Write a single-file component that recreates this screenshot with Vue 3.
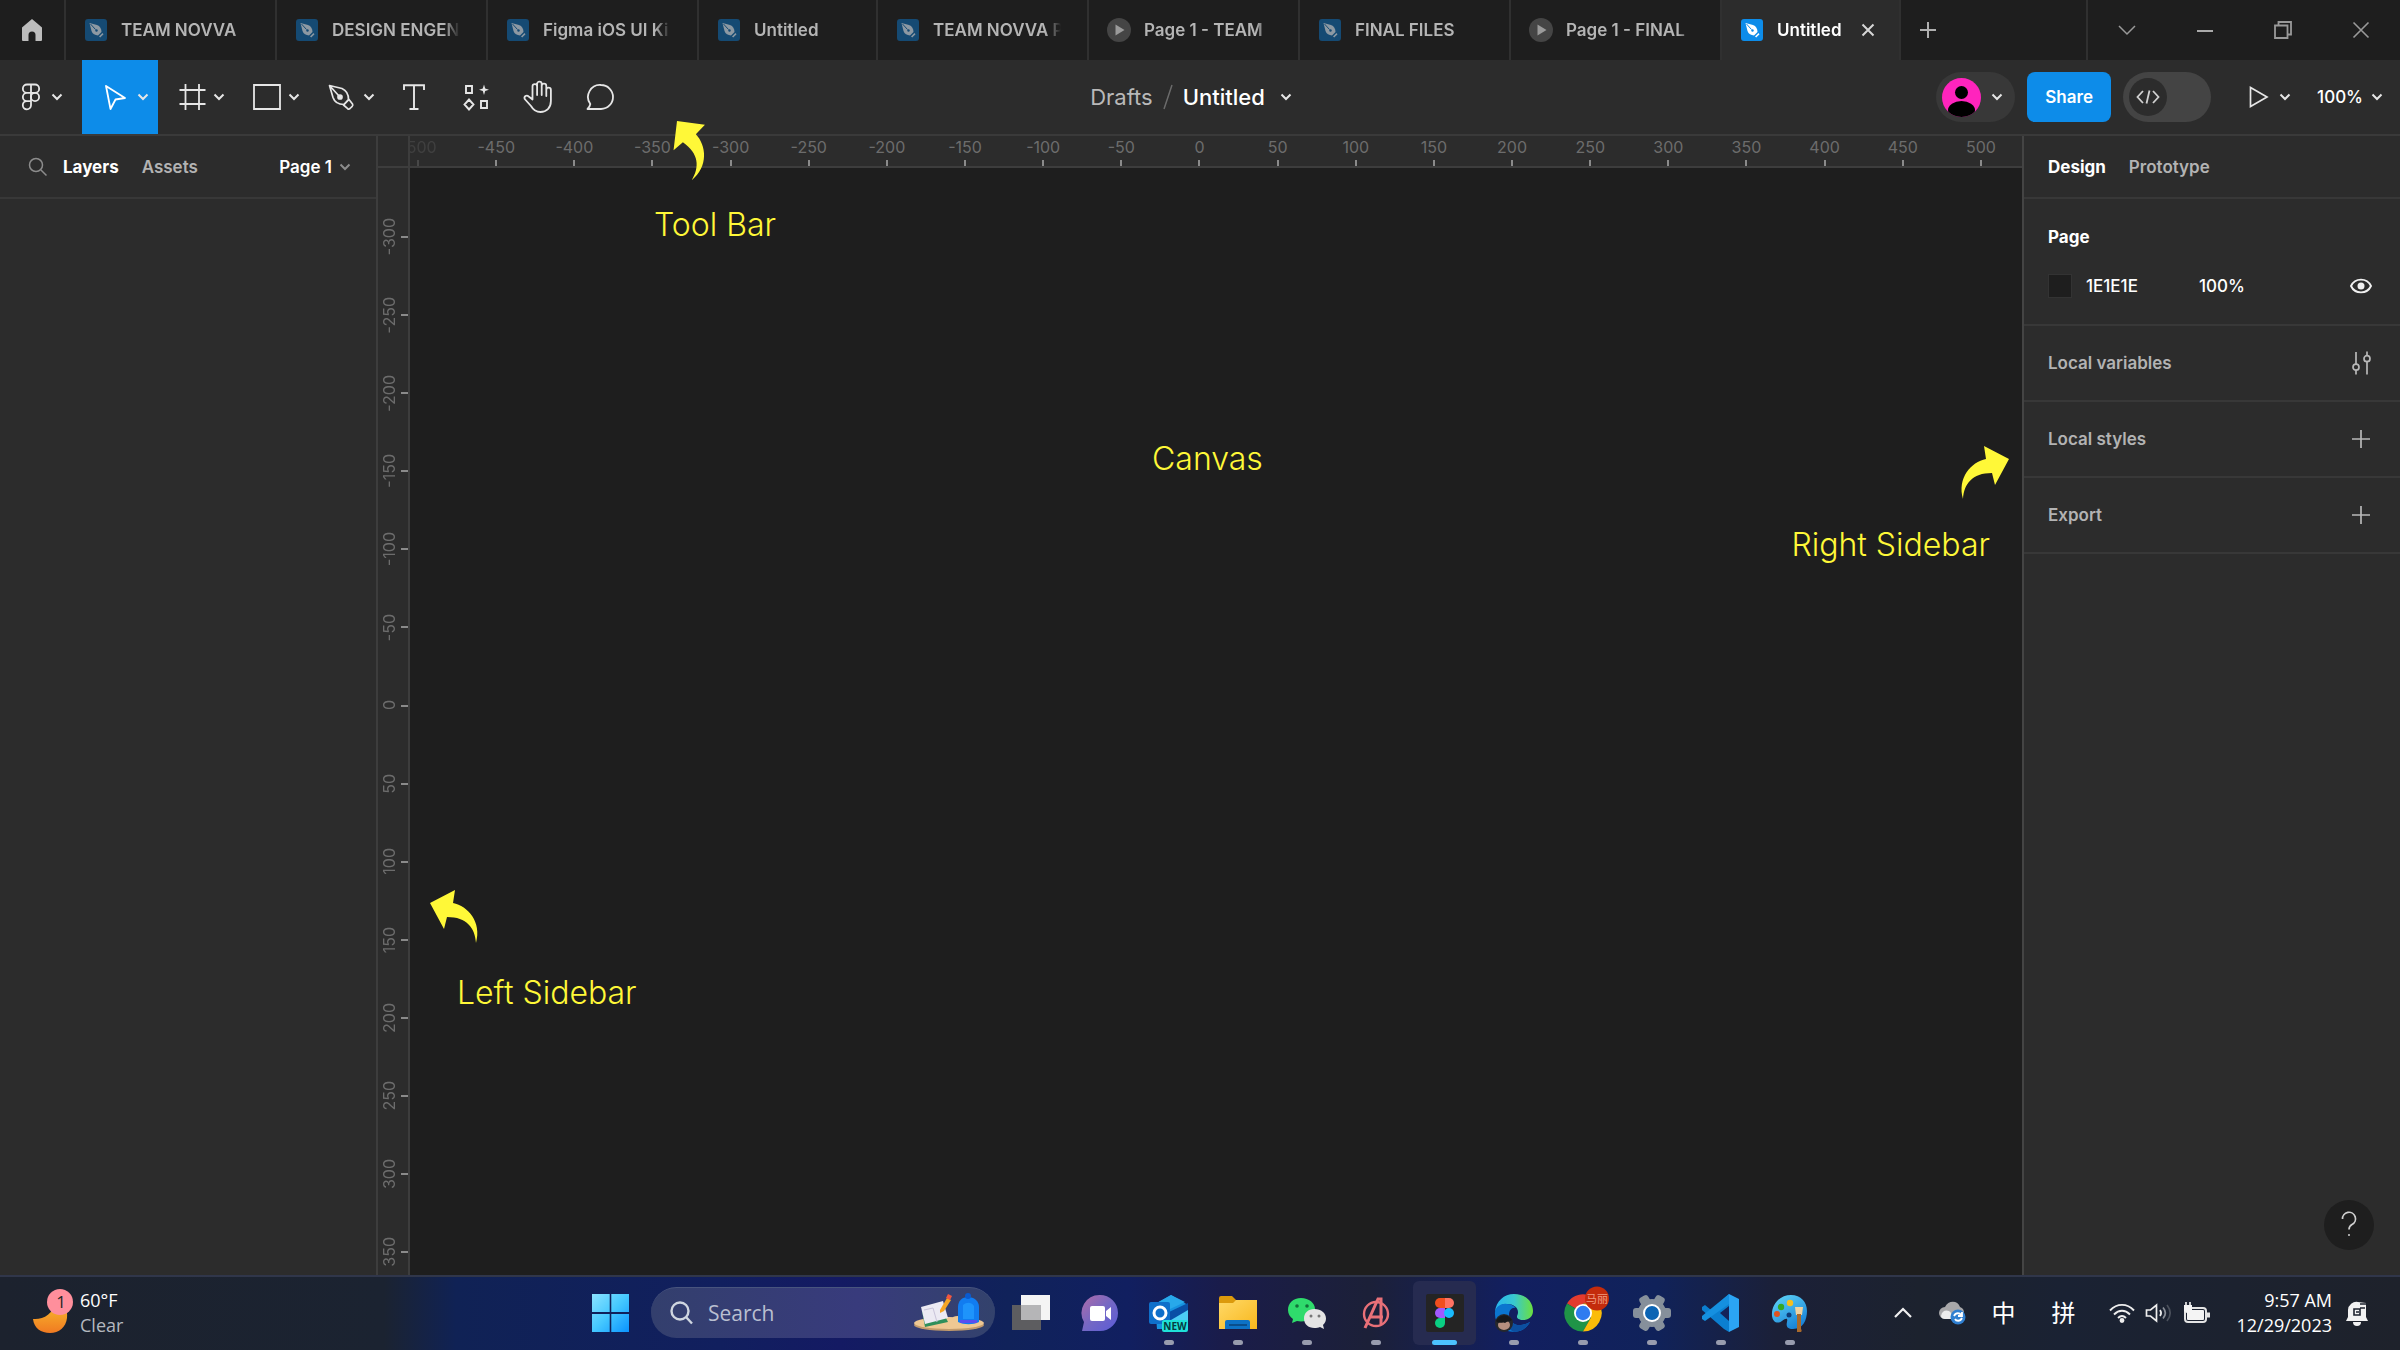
<script setup>
const tabs = [
  { kind: 'file', title: 'TEAM NOVVA', size: 'regular' },
  { kind: 'file', title: 'DESIGN ENGEN', size: 'regular' },
  { kind: 'file', title: 'Figma iOS UI Ki', size: 'regular' },
  { kind: 'file', title: 'Untitled', size: 'short' },
  { kind: 'file', title: 'TEAM NOVVA P', size: 'regular' },
  { kind: 'play', title: 'Page 1 - TEAM', size: 'regular' },
  { kind: 'file', title: 'FINAL FILES', size: 'regular' },
  { kind: 'play', title: 'Page 1 - FINAL', size: 'regular' },
  { kind: 'file', title: 'Untitled', size: 'short', active: true },
]

const range = (from, to) => {
  const out = []
  for (let v = from; v <= to; v += 50) out.push(v)
  return out
}
const rulerX = range(-500, 500)
const rulerY = range(-300, 350)

const sections = [
  { label: 'Local variables', icon: 'sliders' },
  { label: 'Local styles', icon: 'plus' },
  { label: 'Export', icon: 'plus' },
]
</script>

<template>
  <div class="screen">
    <nav class="tabbar" aria-label="Open files">
      <button class="home" aria-label="Home">
        <svg width="22" height="24" viewBox="0 0 22 24"><path d="M11 1 1 9.500V22a1 1 0 0 0 1 1h5.500v-6a3.500 3.500 0 0 1 7 0v6H20a1 1 0 0 0 1-1V9.500L17.500 6.500z" fill="#bdbdbd" /></svg>
      </button>
      <div v-for="(t, i) in tabs" :key="i" class="tab" :class="[t.size, { active: t.active }]">
        <svg v-if="t.kind === 'file'" class="tabicon" width="22" height="22" viewBox="0 0 22 22">
          <rect width="22" height="22" rx="3" :fill="t.active ? '#0d8ce9' : '#154a73'" />
          <g :fill="t.active ? '#fff' : '#8d99a3'">
            <path d="M4.500 4 12 6c3 1 4.500 4 4.500 7L13 16.500c-3-.3-5.500-1.500-6.500-4.500z" />
            <path d="m14 17.500 3.500-3.500 1 1.200-3.300 3.300z" />
          </g>
          <path d="m5.500 5 5 5.500" :stroke="t.active ? '#0d8ce9' : '#154a73'" stroke-width="1" />
          <circle cx="11.500" cy="11.500" r="1.200" :fill="t.active ? '#0d8ce9' : '#154a73'" />
        </svg>
        <svg v-else class="tabicon" width="24" height="24" viewBox="0 0 24 24">
          <circle cx="12" cy="12" r="12" fill="#454545" />
          <path d="M8.500 6.500v11l9-5.500z" fill="#9a9a9a" />
        </svg>
        <a href="#" class="tabtitle">{{ t.title }}</a>
        <button v-if="t.active" class="tabclose" aria-label="Close tab">
          <svg width="14" height="14" viewBox="0 0 14 14"><path d="m1.500 1.500 11 11m0-11-11 11" stroke="#d6d6d6" stroke-width="2" /></svg>
        </button>
      </div>
      <button class="newtab" aria-label="New tab">
        <svg width="18" height="18" viewBox="0 0 18 18"><path d="M9 1v16M1 9h16" stroke="#b0b0b0" stroke-width="2" /></svg>
      </button>
      <div class="wincontrols">
        <button aria-label="Tab list"><svg width="18" height="12" viewBox="0 0 18 12"><path d="m1 2 8 8 8-8" fill="none" stroke="#999" stroke-width="1.500" /></svg></button>
        <button aria-label="Minimize"><svg width="18" height="4" viewBox="0 0 18 4"><path d="M1 3h16" stroke="#aaa" stroke-width="2" /></svg></button>
        <button aria-label="Restore"><svg width="18" height="18" viewBox="0 0 18 18"><path d="M1 4.500h12.500V17H1zM4.500 4.500V1H17v12.500h-3.500" fill="none" stroke="#999" stroke-width="1.800" /></svg></button>
        <button aria-label="Close"><svg width="18" height="18" viewBox="0 0 18 18"><path d="m1.500 1.500 15 15m0-15-15 15" stroke="#999" stroke-width="1.600" /></svg></button>
      </div>
    </nav>

    <header class="toolbar">
      <div class="tools">
        <button class="tool menu" aria-label="Main menu">
          <svg width="24" height="28" viewBox="0 0 24 28" fill="none" stroke="#e6e6e6" stroke-width="1.800">
            <path d="M12 1.500H8a4 4 0 0 0 0 8.300h4zM12 1.500h4a4 4 0 0 1 0 8.300h-4zM12 9.800H8a4 4 0 0 0 0 8.300h4zM12 18.100H8a4.100 4.100 0 1 0 4 4.200z" /><circle cx="16" cy="14" r="4.100" />
          </svg>
          <svg class="chev" width="12" height="8" viewBox="0 0 12 8"><path d="m1.500 1.500 4.500 4.500 4.500-4.500" /></svg>
        </button>
        <button class="tool selected" aria-label="Move">
          <svg width="28" height="28" viewBox="0 0 28 28" fill="none" stroke="#fff" stroke-width="1.800" stroke-linejoin="round"><path d="m4 3 19 12-9.500 1.500L8.500 26z" /></svg>
          <svg class="chev" width="12" height="8" viewBox="0 0 12 8"><path d="m1.500 1.500 4.500 4.500 4.500-4.500" /></svg>
        </button>
        <button class="tool" aria-label="Frame">
          <svg width="28" height="28" viewBox="0 0 28 28" fill="none" stroke="#e6e6e6" stroke-width="1.800"><path d="M7.500 1v26M21 1v26M1.500 7h26M1.500 21h26" /></svg>
          <svg class="chev" width="12" height="8" viewBox="0 0 12 8"><path d="m1.500 1.500 4.500 4.500 4.500-4.500" /></svg>
        </button>
        <button class="tool" aria-label="Rectangle">
          <svg width="28" height="28" viewBox="0 0 28 28" fill="none" stroke="#e6e6e6" stroke-width="1.800"><path d="M1 2h26v24H1z" /></svg>
          <svg class="chev" width="12" height="8" viewBox="0 0 12 8"><path d="m1.500 1.500 4.500 4.500 4.500-4.500" /></svg>
        </button>
        <button class="tool" aria-label="Pen">
          <svg width="28" height="28" viewBox="0 0 28 28" fill="none" stroke="#e6e6e6" stroke-width="1.700" stroke-linejoin="round">
            <path d="M1.500 2.500 14 5.500c4.500 2 6.500 6 6.500 11L16 21.500c-5 0-9.500-2.500-11-7zM1.500 2.500 11 13" /><circle cx="12" cy="14" r="2" fill="#e6e6e6" /><path d="m15.500 22 5.500-5.500 3.500 4.500c.6 1 .3 1.600-.3 2.300L22 25.500c-.8.700-1.500.8-2.300.2z" />
          </svg>
          <svg class="chev" width="12" height="8" viewBox="0 0 12 8"><path d="m1.500 1.500 4.500 4.500 4.500-4.500" /></svg>
        </button>
        <button class="tool single" aria-label="Text">
          <svg width="24" height="28" viewBox="0 0 24 28" fill="none" stroke="#e6e6e6" stroke-width="1.900"><path d="M2 7V2.200h20V7M12 2v23.800M7.500 26h9" /></svg>
        </button>
        <button class="tool single" aria-label="Resources">
          <svg width="28" height="28" viewBox="0 0 28 28" fill="none" stroke="#e6e6e6" stroke-width="1.900"><path d="M4 3h6v7H4zM19 18h6v7h-6zM7 16.500l4.500 5-4.500 5-4.500-5z" /><path d="m22 1.500 1.200 4 3.800 1.200-3.800 1.200-1.200 4-1.200-4L17 6.700l3.800-1.200z" fill="#e6e6e6" stroke="none" /></svg>
        </button>
        <button class="tool single" aria-label="Hand">
          <svg width="32" height="34" viewBox="0 0 32 34" fill="none" stroke="#e6e6e6" stroke-width="1.800" stroke-linecap="round" stroke-linejoin="round"><path d="M10.500 19.500V6.500a2.300 2.300 0 0 1 4.600 0V15 4a2.300 2.300 0 0 1 4.600 0v11V6a2.300 2.300 0 0 1 4.600 0v10-6a2.300 2.300 0 0 1 4.600 0v11c0 7-4.500 11-10.400 11-5 0-7.500-2.500-9.500-6L2.700 19c-1-2.500 1.800-4.500 4-2.500z" /></svg>
        </button>
        <button class="tool single" aria-label="Comment">
          <svg width="30" height="28" viewBox="0 0 30 28" fill="none" stroke="#e6e6e6" stroke-width="1.800" stroke-linejoin="round"><path d="M16 2a12 12 0 1 1 0 24H2.500c1.800-1.500 2.500-3 2.800-5A12 12 0 0 1 16 2z" /></svg>
        </button>
      </div>
      <div class="crumbs">
        <a href="#">Drafts</a>
        <svg width="10" height="26" viewBox="0 0 10 26"><path d="M9 1 1 25" stroke="#6b6b6b" stroke-width="1.500" /></svg>
        <a href="#" class="current">Untitled</a>
        <svg class="chev" width="12" height="8" viewBox="0 0 12 8"><path d="m1.500 1.500 4.500 4.500 4.500-4.500" /></svg>
      </div>
      <div class="actions">
        <button class="account" aria-label="Account">
          <svg width="39" height="39" viewBox="0 0 39 39"><defs><clipPath id="face"><circle cx="19.500" cy="19.500" r="19.500" /></clipPath></defs><g clip-path="url(#face)"><rect width="39" height="39" fill="#ff24bd" /><circle cx="19.500" cy="14.500" r="6.500" /><ellipse cx="19.500" cy="32" rx="13.500" ry="9" /></g></svg>
          <svg class="chev" width="12" height="8" viewBox="0 0 12 8"><path d="m1.500 1.500 4.500 4.500 4.500-4.500" /></svg>
        </button>
        <button class="share">Share</button>
        <label class="devmode">
          <input type="checkbox" aria-label="Dev Mode" />
          <span class="knob"><svg width="24" height="16" viewBox="0 0 24 16" fill="none" stroke="#d0d0d0" stroke-width="1.800"><path d="M7 2 1.500 8 7 14M17 2l5.500 6-5.500 6M13.500 1.500l-3 13" /></svg></span>
        </label>
        <button class="present" aria-label="Present">
          <svg width="20" height="24" viewBox="0 0 20 24"><path d="M1.500 2.500v19L18 12z" fill="none" stroke="#e6e6e6" stroke-width="1.700" /></svg>
          <svg class="chev" width="12" height="8" viewBox="0 0 12 8"><path d="m1.500 1.500 4.500 4.500 4.500-4.500" /></svg>
        </button>
        <button class="zoom">100%
          <svg class="chev" width="12" height="8" viewBox="0 0 12 8"><path d="m1.500 1.500 4.500 4.500 4.500-4.500" /></svg>
        </button>
      </div>
    </header>

    <main class="work">
      <aside class="left">
        <div class="panelhead">
          <button class="find" aria-label="Find"><svg width="20" height="20" viewBox="0 0 20 20" fill="none" stroke="#8c8c8c" stroke-width="1.500"><circle cx="8" cy="8" r="6.500" /><path d="m13 13 5.500 5.500" /></svg></button>
          <button class="ptab on">Layers</button>
          <button class="ptab">Assets</button>
          <button class="pages">Page 1 <svg class="chev dim" width="12" height="8" viewBox="0 0 12 8"><path d="m1.500 1.500 4.500 4.500 4.500-4.500" /></svg></button>
        </div>
      </aside>

      <section class="stage">
        <div class="corner"></div>
        <div class="rulerx"><div class="trackx"><span v-for="v in rulerX" :key="v" :class="{ faint: v === -500 }">{{ v }}</span></div></div>
        <div class="rulery"><div class="tracky"><span v-for="v in rulerY" :key="v"><b>{{ v }}</b></span></div></div>
        <div class="canvas">
          <svg class="arrow a-tool" width="48" height="54" viewBox="0 0 48 54"><path d="M0 13 25 0l-2 13C38 16 52 32 46 53 45 38 37 27 17 27l-3 12z" transform="rotate(35 0 13)" /></svg>
          <p class="note n-tool">Tool Bar</p>
          <p class="note n-canvas">Canvas</p>
          <svg class="arrow a-right" width="48" height="54" viewBox="0 0 48 54"><path d="M48 13 23 0l2 13C10 16-4 32 2 53 3 38 11 27 31 27l3 12z" /></svg>
          <p class="note n-right">Right Sidebar</p>
          <svg class="arrow a-left" width="48" height="54" viewBox="0 0 48 54"><path d="M0 13 25 0l-2 13C38 16 52 32 46 53 45 38 37 27 17 27l-3 12z" /></svg>
          <p class="note n-left">Left Sidebar</p>
        </div>
      </section>

      <aside class="right">
        <div class="panelhead">
          <button class="ptab on">Design</button>
          <button class="ptab">Prototype</button>
        </div>
        <div class="page">
          <h2>Page</h2>
          <div class="fill">
            <span class="swatch"></span>
            <input class="hex" value="1E1E1E" aria-label="Page colour" />
            <input class="alpha" value="100%" aria-label="Opacity" />
            <button aria-label="Toggle visibility"><svg width="22" height="16" viewBox="0 0 22 16"><path d="M1 8c4-8.500 16-8.500 20 0-4 8.500-16 8.500-20 0z" fill="none" stroke="#f0f0f0" stroke-width="1.900" /><circle cx="11" cy="8" r="3.500" fill="#f0f0f0" /></svg></button>
          </div>
        </div>
        <div v-for="s in sections" :key="s.label" class="row">
          <h3>{{ s.label }}</h3>
          <button :aria-label="s.label">
            <svg v-if="s.icon === 'sliders'" width="22" height="24" viewBox="0 0 22 24" fill="none" stroke="#b8b8b8" stroke-width="1.700"><path d="M6 1v12.500M6 19v4.500M17 .5V5M17 10.500v13" /><circle cx="6" cy="16.200" r="3" /><circle cx="17" cy="7.700" r="3" /></svg>
            <svg v-else width="22" height="20" viewBox="0 0 22 20"><path d="M11 1v18M2 10h18" stroke="#b8b8b8" stroke-width="1.700" /></svg>
          </button>
        </div>
        <button class="help" aria-label="Help"><svg width="18" height="28" viewBox="0 0 18 28" fill="none" stroke="#d0d0d0" stroke-width="1.700"><path d="M2.500 8a6.500 6.500 0 1 1 9.500 5.500c-2.500 1.400-3 2.500-3 5" /><circle cx="9" cy="24" r="1" fill="#d0d0d0" stroke="none" /></svg></button>
      </aside>
    </main>

    <footer class="taskbar">
      <a href="#" class="weather">
        <svg width="40" height="48" viewBox="0 0 40 48"><defs><linearGradient id="moon" x2="0" y2="1"><stop offset="0" stop-color="#f9bd2c" /><stop offset="1" stop-color="#f07a22" /></linearGradient></defs><path d="M0 30c10 1 20-5 23-17 9 1 12 8 11 16-1 9-8 15-17 15C8 44 1 39 0 30z" fill="url(#moon)" /><circle cx="27" cy="13" r="13" fill="#ff8f9c" /><text x="28" y="19" text-anchor="middle" font-size="17" fill="#252525">1</text></svg>
        <span class="wtext"><span>60°F</span><span class="sub">Clear</span></span>
      </a>

      <div class="dock">
        <button class="app" aria-label="Start">
          <svg width="37" height="38" viewBox="0 0 37 38"><defs><linearGradient id="win" x2="1" y2="1"><stop offset="0" stop-color="#8be3ff" /><stop offset=".5" stop-color="#45c8ff" /><stop offset="1" stop-color="#0a93ff" /></linearGradient></defs><path d="M0 0h17.700v18H0zM19.300 0H37v18H19.300zM0 20h17.700v18H0zM19.300 20H37v18H19.300z" fill="url(#win)" /></svg>
        </button>
        <label class="search">
          <svg width="24" height="24" viewBox="0 0 24 24" fill="none" stroke="#cfd6e0" stroke-width="2.400"><circle cx="11" cy="10" r="8.500" /><path d="m17 16 6 6.500" /></svg>
          <input type="search" placeholder="Search" aria-label="Search" />
          <svg width="72" height="40" viewBox="0 0 72 40"><ellipse cx="36" cy="32" rx="35" ry="6" fill="#c39b6c" /><ellipse cx="36" cy="30" rx="35" ry="6" fill="#efc893" /><path d="M40 24c6-2 12-2 16 0v8H40z" fill="#efc893" /><path d="m9 18 3 16 23-5-2-4z" fill="#2f8f5b" /><path d="m8 14 22-6 5 17-23 6z" fill="#eceaf3" /><path d="m11 17 9-2 4 14" fill="none" stroke="#c9c4da" /><path d="m27 17 7-12 4 2-7 11-4 2z" fill="#f5a524" /><path d="m33 5 2-4 4 2-2 4z" fill="#f2573f" /><path d="M45 14c0-6 4-10 10-10s11 4 11 10v15c-6 3-15 3-21 0z" fill="#117cf0" /><path d="M50 12c4-3 8-3 11 1v13H50z" fill="#1e94fb" /><circle cx="55" cy="3" r="3" fill="#0a5bd0" /><path d="M47 27h17v3H47z" fill="#5a4df0" /></svg>
        </label>
        <button class="app" aria-label="Task view">
          <svg width="38" height="38" viewBox="0 0 38 38"><path d="M0 11h29v25H0z" fill="#5d5d60" /><path d="M9 1h29v25H9z" fill="#f4f4f4" /><path d="M9 11h20v15H9z" fill="#b5b5b7" /></svg>
        </button>
        <button class="app" aria-label="Chat">
          <svg width="38" height="38" viewBox="0 0 38 38"><defs><linearGradient id="chat" x2="1" y2="1"><stop offset="0" stop-color="#b06ba8" /><stop offset=".5" stop-color="#7468c4" /><stop offset="1" stop-color="#5b5bd8" /></linearGradient></defs><path d="M19 1a18 18 0 1 1 0 36H1l2-9A18 18 0 0 1 19 1z" fill="url(#chat)" /><rect x="9" y="12" width="15" height="15" rx="2" fill="#fff" /><path d="m25 17 5-4v13l-5-4z" fill="#fff" /></svg>
        </button>
        <button class="app open" aria-label="Outlook">
          <svg width="40" height="38" viewBox="0 0 40 38"><path d="M6 10 22 1l17 10v24H8z" fill="#1793e0" /><path d="M22 1 6 10v12l30-14z" fill="#28a8ea" /><path d="m20 18 19-9v10L20 28z" fill="#0a4fa6" /><path d="M22 26 39 16v20H22z" fill="#4ccdf5" /><rect x="0" y="8" width="21" height="22" rx="2" fill="#0f6fca" /><circle cx="11" cy="19" r="6" fill="none" stroke="#fff" stroke-width="3" /><rect x="13" y="26" width="26" height="12" rx="2" fill="#1fe0d8" /><text x="26" y="36" text-anchor="middle" font-size="10" font-weight="700" fill="#063b40">NEW</text></svg>
        </button>
        <button class="app open" aria-label="File Explorer">
          <svg width="38" height="36" viewBox="0 0 38 36"><defs><linearGradient id="fold" x2="1" y2="1"><stop offset="0" stop-color="#ffd968" /><stop offset="1" stop-color="#f8b71c" /></linearGradient></defs><path d="M0 3a2 2 0 0 1 2-2h11l4 4h19v12H0z" fill="#dc9a0c" /><path d="M0 8h14l3-3h21v29H0z" fill="url(#fold)" /><path d="M6 34v-7a2 2 0 0 1 2-2h21a2 2 0 0 1 2 2v7z" fill="#0d72c6" /><path d="M10 30h18" stroke="#0a4e8c" stroke-width="2" /></svg>
        </button>
        <button class="app open" aria-label="WeChat">
          <svg width="40" height="34" viewBox="0 0 40 34"><path d="M14 2C6 2 1 7 1 14c0 4 2 7 5 9l-1 4 5-2c9 2 18-3 18-12C28 7 22 2 14 2z" fill="#2fdb6c" /><circle cx="10" cy="10" r="1.800" fill="#12713a" /><circle cx="20" cy="10" r="1.800" fill="#12713a" /><path d="M27.500 13C21 13 17 17 17 22.500S21 32 27.500 32c2 0 4-.4 5.500-1l4 2-1-4c2-1.700 3-4 3-6.500C39 17 34 13 27.500 13z" fill="#e4e4e4" /><circle cx="24" cy="20" r="1.500" fill="#777" /><circle cx="32" cy="20" r="1.500" fill="#777" /></svg>
        </button>
        <button class="app open" aria-label="Avengers">
          <svg width="28" height="34" viewBox="0 0 28 34" fill="none" stroke="#e87078" stroke-width="2.400"><circle cx="14" cy="18" r="12" /><path d="M3 32 16 3h3v25M8 21h13" stroke-width="3" /></svg>
        </button>
        <button class="app open current" aria-label="Figma">
          <svg width="38" height="38" viewBox="0 0 38 38"><rect width="38" height="38" rx="2" fill="#242424" /><path d="M19 4h-5a5 5 0 0 0 0 10h5z" fill="#f24e1e" /><path d="M19 4h4a5 5 0 0 1 0 10h-4z" fill="#ff7262" /><path d="M19 14h-5a5 5 0 0 0 0 10h5z" fill="#a259ff" /><circle cx="23" cy="19" r="5" fill="#1abcfe" /><path d="M19 24h-5a5 5 0 1 0 5 5z" fill="#0acf83" /></svg>
        </button>
        <button class="app open" aria-label="Edge">
          <svg width="40" height="38" viewBox="0 0 40 38"><defs><linearGradient id="edge" x2="1" y2="0"><stop offset="0" stop-color="#27b4ee" /><stop offset=".5" stop-color="#38c8d0" /><stop offset="1" stop-color="#6be03e" /></linearGradient></defs><path d="M20 0C32 0 39 8 39 17c0 6-5 9-10 9-4 0-6-2-6-3 0-2 1-2 1-5 0-5-5-8-11-8C7 10 3 13 1 18 2 7 10 0 20 0z" fill="url(#edge)" /><path d="M1 18C2 12 8 9 13 10c4 0 7 2 9 4-4-1-7 2-7 7 0 8 8 14 21 7-3 6-9 10-16 10C9 38 0 30 1 18z" fill="#0b75cf" /><path d="M15 21c0 8 8 14 21 7-3 6-9 10-16 10-6-3-9-10-5-17z" fill="#0c4fa0" /><circle cx="10" cy="29" r="9" fill="#26282c" /><ellipse cx="10" cy="31" rx="6" ry="5" fill="#b58f7e" /><path d="M2 27c3-7 12-8 16-1-3 2-5 1-7 3-2-2-5 2-9-2z" fill="#17181a" /></svg>
        </button>
        <button class="app open" aria-label="Chrome">
          <svg class="wide" width="46" height="46" viewBox="0 0 46 46"><path d="M19 27 3 17.500A18.500 18.500 0 0 1 35 17.500H19z" fill="#e33b2e" /><path d="M19 27 3 17.500A18.500 18.500 0 0 0 19 45.500l8-14z" fill="#1f9447" /><path d="M19 17.500h16A18.500 18.500 0 0 1 19 45.500l8-14z" fill="#fbbc09" /><circle cx="19" cy="27" r="9" fill="#fff" /><circle cx="19" cy="27" r="7.200" fill="#2f7cf0" /><circle cx="33" cy="12.500" r="12" fill="#c42b0c" /><text x="33" y="17" text-anchor="middle" font-size="11" fill="#ef9a80">马丽</text></svg>
        </button>
        <button class="app open" aria-label="Settings">
          <svg width="38" height="38" viewBox="0 0 38 38"><g fill="#86909b"><circle cx="19" cy="19" r="14" /><rect v-for="a in [30, 90, 150]" :key="a" x="14" y="0" width="10" height="38" rx="3" :transform="`rotate(${a} 19 19)`" /></g><circle cx="19" cy="19" r="9" fill="#fff" /><circle cx="19" cy="19" r="7" fill="#0b64b4" /></svg>
        </button>
        <button class="app open" aria-label="Visual Studio Code">
          <svg width="40" height="38" viewBox="0 0 40 38"><path d="M28 0 10 16 4 11 1 13v3l22 19 5 3z" fill="#0b7fd0" /><path d="m28 10-24 17-3-2v-3L28 0z" fill="#1590e0" /><path d="m28 0 10 5v28l-10 5z" fill="#2ba4f4" /><path d="m28 12-9 7 9 8z" fill="#14235a" /></svg>
        </button>
        <button class="app open" aria-label="Paint">
          <svg width="38" height="38" viewBox="0 0 38 38"><defs><linearGradient id="paint" x2=".6" y2="1"><stop offset="0" stop-color="#62d8f8" /><stop offset="1" stop-color="#1a84d8" /></linearGradient></defs><path d="M20 1C30 1 36 8 36 17s-4 18-14 18c-6 0-7-3-6-7s-1-4-5-1-9 2-10-5C0 10 9 1 20 1z" fill="url(#paint)" /><circle cx="10" cy="13" r="3.200" fill="#32a824" /><circle cx="19" cy="9" r="3.200" fill="#f4bf20" /><circle cx="6" cy="20" r="3" fill="#e0521d" /><circle cx="18" cy="21" r="2.500" fill="#0d3c78" /><path d="M24 13h8l-1 8h-6z" fill="#f0d2a0" /><path d="M26 20h4v15a2 2 0 0 1-4 3z" fill="#a8692c" /></svg>
        </button>
      </div>

      <div class="tray">
        <button aria-label="Show hidden icons"><svg width="20" height="12" viewBox="0 0 20 12"><path d="m2 10 8-8 8 8" fill="none" stroke="#f0f0f0" stroke-width="2.200" /></svg></button>
        <button class="t-cloud" aria-label="OneDrive"><svg width="28" height="24" viewBox="0 0 28 24"><path d="M9 18H6a6 6 0 0 1 0-12C9-1 19-1 21 6c3 1 4 3 4 6l-4 6z" fill="#a8a8aa" /><path d="M2 15c1-6 7-7 10-3l3 6H6c-2 0-4-1-4-3z" fill="#ececec" /><circle cx="19" cy="16" r="7.500" fill="#2f7fd0" /><path d="M15 15c2-4 6-3 7-1m1-3v4h-4M23 17c-2 4-6 3-7 1" fill="none" stroke="#fff" stroke-width="1.800" /></svg></button>
        <button class="ime">中</button>
        <button class="ime">拼</button>
        <button class="status" aria-label="Network, volume and battery">
          <svg width="26" height="20" viewBox="0 0 26 20" fill="none" stroke="#eee" stroke-width="1.900"><path d="M1 7.500c7-7.500 17-7.500 24 0M5 11.500c5-5 11-5 16 0M9 15c2.500-2.500 5.500-2.500 8 0" /><circle cx="13" cy="17.500" r="1.500" fill="#eee" /></svg>
          <svg width="28" height="20" viewBox="0 0 28 20" fill="none" stroke="#eee" stroke-width="1.700"><path d="M1.500 7v6h4l6 5V2l-6 5zM15 7c1.500 2 1.500 4 0 6" /><path d="M18 4.500c3 3.500 3 7.500 0 11" stroke="#8a8f98" /><path d="M22 2c4 5 4 11 0 16" stroke="#4b515c" /></svg>
          <svg width="28" height="22" viewBox="0 0 28 22"><rect x="2" y="6" width="21" height="14" rx="3" fill="none" stroke="#e4e4e4" stroke-width="2" /><rect x="4" y="8" width="17" height="10" rx="1" fill="#f4f4f4" /><path d="M24 10.500h3v5h-3z" fill="#e4e4e4" /><path d="M1 3h8v6L5 12 1 9z" fill="#f4f4f4" /><path d="M3 0v4M7 0v4" stroke="#f4f4f4" stroke-width="1.600" /></svg>
        </button>
        <button class="clock"><span>9:57 AM</span><span>12/29/2023</span></button>
        <button class="t-bell" aria-label="Notifications"><svg width="24" height="26" viewBox="0 0 24 26"><path d="M3 10a8.500 8.500 0 0 1 10-8l8 1v14l2 4H1l2-4z" fill="#f2f2f2" /><path d="M8 22h8a4 4 0 0 1-8 0z" fill="#f2f2f2" /><path d="M15 4h7M15 8h5M9 9h6v6H9zM11 12h3" stroke="#1c222e" stroke-width="1.600" fill="none" /></svg></button>
      </div>
    </footer>
  </div>
</template>

<style>
body {
  margin: 0;
  background: #1e1e1e;
}
</style>

<style scoped>
.screen {
  display: flex;
  flex-direction: column;
  min-height: 100vh;
  background: #2c2c2c;
  color: #fff;
  font-family: Inter, "Noto Sans CJK SC", sans-serif;
  font-size: 17px;
  line-height: 24px;
}
.screen *,
.screen *::before,
.screen *::after {
  box-sizing: border-box;
}
button,
input {
  margin: 0;
  padding: 0;
  border: 0;
  background: none;
  color: inherit;
  font: inherit;
}
button {
  display: flex;
  align-items: center;
  justify-content: center;
  flex: none;
}
a {
  color: inherit;
  text-decoration: none;
}
svg {
  display: block;
  flex: none;
}
.chev {
  fill: none;
  stroke: #e6e6e6;
  stroke-width: 2;
}
.chev.dim {
  stroke: #8c8c8c;
}

/* File tabs */
.tabbar {
  display: flex;
  height: 60px;
  background: #1e1e1e;
}
.home {
  width: 66px;
  border-right: 2px solid #303030;
}
.tab {
  display: flex;
  align-items: center;
  gap: 13px;
  padding-left: 18px;
  border-right: 2px solid #303030;
  color: #b5b5b5;
  font-weight: 600;
}
.tab.regular {
  width: 211px;
}
.tab.short {
  width: 179px;
}
.tab.active {
  background: #2c2c2c;
  color: #fff;
}
.tabicon {
  width: 24px;
}
.tabtitle {
  width: 128px;
  overflow: hidden;
  white-space: nowrap;
  mask-image: linear-gradient(to right, #000 112px, transparent 128px);
}
.active .tabtitle {
  width: 71px;
}
.newtab {
  width: 54px;
}
.wincontrols {
  display: flex;
  margin-left: auto;
  border-left: 2px solid #303030;
}
.wincontrols button {
  width: 78px;
}

/* Toolbar */
.toolbar {
  display: grid;
  grid-template-columns: 1fr auto 1fr;
  height: 76px;
  border-bottom: 2px solid #3a3a3a;
}
.tools {
  display: flex;
}
.tool {
  width: 75px;
  gap: 7px;
  padding-left: 11px;
}
.tool.menu {
  width: 82px;
  justify-content: flex-start;
  padding-left: 19px;
  gap: 8px;
}
.tool.single {
  width: 62px;
  padding: 0;
}
.tool.selected {
  width: 76px;
  background: #0d8ce9;
}
.crumbs {
  display: flex;
  align-items: center;
  gap: 10px;
  padding-right: 18px;
  color: #b9b9b9;
  font-size: 22px;
}
.crumbs .current {
  color: #fff;
  font-weight: 500;
}
.crumbs .chev {
  margin-left: 5px;
}
.actions {
  display: flex;
  align-items: center;
  justify-content: flex-end;
  padding-right: 17px;
  font-weight: 500;
}
.account {
  justify-content: flex-start;
  width: 79px;
  height: 50px;
  gap: 10px;
  padding-left: 6px;
  border-radius: 25px;
  background: #383838;
}
.share {
  width: 84px;
  height: 50px;
  margin: 0 12px;
  border-radius: 8px;
  background: #0d8ce9;
  font-weight: 600;
}
.devmode {
  display: flex;
  align-items: center;
  width: 88px;
  height: 50px;
  padding-left: 6px;
  border-radius: 25px;
  background: #444;
}
.devmode input {
  appearance: none;
  width: 0;
}
.knob {
  display: flex;
  align-items: center;
  justify-content: center;
  width: 38px;
  height: 38px;
  border-radius: 50%;
  background: #2c2c2c;
}
.present {
  gap: 10px;
  margin-left: 38px;
}
.zoom {
  gap: 8px;
  margin-left: 26px;
}

/* Panels */
.work {
  display: flex;
  flex: 1;
}
.left {
  width: 376px;
}
.right {
  position: relative;
  width: 378px;
  border-left: 2px solid #444;
}
.panelhead {
  display: flex;
  align-items: center;
  height: 63px;
  padding-left: 24px;
  border-bottom: 2px solid #383838;
}
.ptab {
  margin-right: 23px;
  color: #b3b3b3;
  font-weight: 600;
}
.ptab.on {
  color: #fff;
  font-weight: 700;
}
.find {
  margin: 0 15px 0 4px;
}
.pages {
  gap: 7px;
  margin: 0 25px 0 auto;
  font-weight: 600;
}
.page {
  height: 127px;
  padding: 26px 28px 0 24px;
  border-bottom: 2px solid #383838;
}
h2,
h3 {
  margin: 0;
  font-size: 17px;
  font-weight: 700;
}
h3 {
  color: #b3b3b3;
  font-weight: 600;
}
.fill {
  display: flex;
  align-items: center;
  height: 24px;
  margin-top: 25px;
  font-weight: 500;
}
.swatch {
  width: 24px;
  height: 24px;
  margin-right: 14px;
  border: 1px solid #333;
  background: #1e1e1e;
}
.hex {
  width: 113px;
}
.alpha {
  width: 80px;
}
.fill button {
  margin-left: auto;
}
.row {
  display: flex;
  align-items: center;
  justify-content: space-between;
  height: 76px;
  padding: 0 28px 0 24px;
  border-bottom: 2px solid #383838;
}
.help {
  position: absolute;
  right: 26px;
  bottom: 25px;
  width: 50px;
  height: 50px;
  border-radius: 50%;
  background: #1e1e1e;
}

/* Canvas and rulers */
.stage {
  display: grid;
  flex: 1;
  grid-template: 32px 1fr / 32px 1fr;
  min-width: 0;
  border-left: 2px solid #3d3d3d;
  color: #6c6c6c;
  font-size: 16px;
}
.corner,
.rulery {
  border-right: 2px solid #3d3d3d;
}
.corner,
.rulerx {
  border-bottom: 2px solid #3d3d3d;
}
.rulerx,
.rulery {
  overflow: hidden;
}
.trackx {
  display: flex;
  height: 30px;
  margin: 0 2px 0 -31px;
}
.trackx span {
  position: relative;
  flex: 1 0 0;
  text-align: center;
  line-height: 22px;
}
.trackx span::after {
  content: "";
  position: absolute;
  left: 50%;
  bottom: 0;
  width: 2px;
  height: 6px;
  margin-left: -1px;
  background: #8a8a8a;
}
.trackx .faint {
  opacity: 0.3;
}
.tracky {
  display: flex;
  flex-direction: column;
  height: calc(100% - 14px);
  margin-top: 30px;
}
.tracky span {
  position: relative;
  display: flex;
  flex: 1 0 0;
  align-items: center;
}
.tracky b {
  width: 22px;
  font-weight: 400;
  line-height: 22px;
  text-align: center;
  white-space: nowrap;
  writing-mode: vertical-rl;
  transform: rotate(180deg);
}
.tracky span::after {
  content: "";
  position: absolute;
  right: 0;
  top: 50%;
  width: 7px;
  height: 2px;
  margin-top: -1px;
  background: #8a8a8a;
}
.canvas {
  position: relative;
  background: #1e1e1e;
}
.note {
  position: absolute;
  margin: 0;
  color: #fff838;
  font-size: 32px;
  font-weight: 300;
  line-height: 40px;
  white-space: nowrap;
}
.arrow {
  position: absolute;
  overflow: visible;
  fill: #fff838;
}
.a-tool {
  left: 267px;
  top: -60px;
}
.n-tool {
  left: 244px;
  top: 37px;
}
.n-canvas {
  left: 742px;
  top: 271px;
}
.a-right {
  right: 13px;
  top: 278px;
}
.n-right {
  right: 32px;
  top: 357px;
}
.a-left {
  left: 20px;
  top: 722px;
}
.n-left {
  left: 47px;
  top: 805px;
}

/* Taskbar */
.taskbar {
  display: grid;
  grid-template-columns: 1fr auto 1fr;
  height: 75px;
  padding-bottom: 2px;
  border-top: 2px solid #30364a;
  background: linear-gradient(to right, #1c222e 0, #1b2331 16%, #102255 19%, #111f5e 30%, #141a63 35%, #10225a 42%, #111f60 47%, #1a1c4a 51%, #1c2038 57%, #121f60 63%, #10225a 69%, #1b2038 74%, #1c222e 80%, #1a2233 86%, #1e222b 100%);
  font-family: "Open Sans", "Noto Sans CJK SC", sans-serif;
}
.weather {
  display: flex;
  align-items: center;
  gap: 7px;
  padding-left: 33px;
}
.wtext {
  display: flex;
  flex-direction: column;
  font-size: 18px;
  line-height: 25px;
}
.sub {
  color: #b4b8bf;
}
.dock {
  display: flex;
  align-items: center;
}
.app {
  position: relative;
  width: 69px;
  height: 64px;
}
.app .wide {
  margin: -8px 0 0 8px;
}
.app.open::after {
  content: "";
  position: absolute;
  bottom: 0;
  left: 30px;
  width: 10px;
  height: 5px;
  border-radius: 3px;
  background: #989cae;
}
.app.current {
  width: 63px;
  margin: 0 3px;
  border-radius: 6px;
  background: #262b50;
}
.app.current::after {
  left: 19px;
  width: 25px;
  background: #4cc2ff;
}
.search {
  display: flex;
  align-items: center;
  width: 344px;
  height: 51px;
  margin: 0 1px 0 6px;
  padding: 0 10px 0 18px;
  border-radius: 26px;
  border-top: 1px solid #48547e;
  background: linear-gradient(to right, #333f6d, #383b7c 60%, #33426c);
}
.search input {
  flex: 1;
  width: 100px;
  min-width: 0;
  padding-left: 15px;
  font-size: 21px;
}
.search input::placeholder {
  color: #b9bfd0;
  opacity: 1;
}
.tray {
  display: flex;
  align-items: center;
  justify-content: flex-end;
  padding-right: 31px;
}
.t-cloud {
  margin-left: 26px;
}
.ime {
  width: 24px;
  margin-left: 24px;
  font-size: 24px;
}
.ime + .ime {
  margin-left: 36px;
}
.status {
  gap: 10px;
  margin: 0 25px 0 34px;
}
.clock {
  flex-direction: column;
  align-items: flex-end;
  font-size: 18px;
  line-height: 25px;
}
.t-bell {
  margin-left: 13px;
}
</style>
